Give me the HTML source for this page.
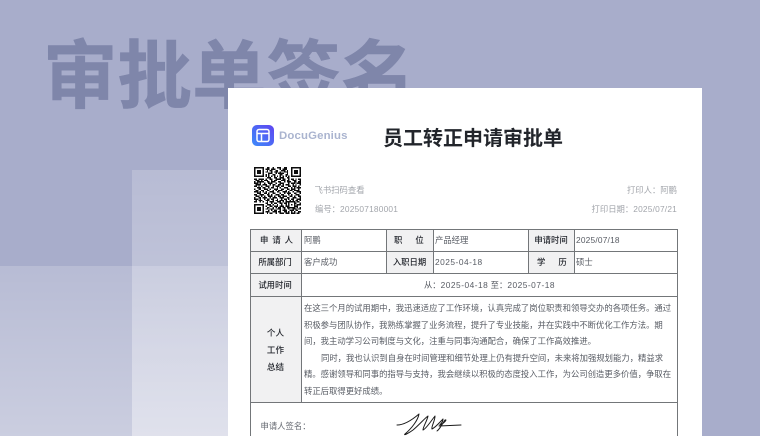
<!DOCTYPE html>
<html lang="zh-CN"><head><meta charset="utf-8"><title>审批单签名</title>
<style>
html,body{margin:0;padding:0}
body{width:760px;height:436px;overflow:hidden;position:relative;background:#a8adcb;font-family:"Liberation Sans","Noto Sans CJK SC",sans-serif}
.a{position:absolute;white-space:nowrap}
.ov1{position:absolute;left:132px;top:170px;width:100px;height:266px;background:linear-gradient(180deg,rgba(255,255,255,.18),rgba(255,255,255,.4))}
.ov2{position:absolute;left:0;top:266px;width:232px;height:170px;background:linear-gradient(180deg,rgba(255,255,255,.18),rgba(255,255,255,.4))}
h1{position:absolute;left:43px;top:21px;margin:0;font-size:74.500px;line-height:100px;font-weight:700;color:#7f86aa;-webkit-text-stroke:.6px #7f86aa;font-family:"Noto Sans CJK SC",sans-serif;white-space:nowrap}
.card{position:absolute;left:228px;top:88px;width:474px;height:348px;background:#fff;overflow:hidden}
.t{position:absolute;font-size:8.36px;line-height:12px;white-space:nowrap;color:#585c64;font-family:"Liberation Sans","Noto Sans CJK SC",sans-serif}
.b{font-weight:500;color:#23262d;text-align:center;font-family:"Noto Sans CJK SC",sans-serif}
.s{text-align:left}
.g{color:#a2a5ab}
.n{letter-spacing:.2px}
.d{letter-spacing:.5px}
.l{position:absolute;background:#737679}
.h{position:absolute;background:#f1f1f2}
</style></head><body>
<div class="ov1"></div><div class="ov2"></div>
<h1>审批单签名</h1>
<div class="card">
<svg class="a" style="left:23.500px;top:37px" width="22" height="21" viewBox="0 0 22 21"><defs><linearGradient id="lg" x1="0" y1="1" x2="1" y2="0"><stop offset="0" stop-color="#3d8bfa"/><stop offset="1" stop-color="#5f45f0"/></linearGradient></defs><rect width="22" height="21" rx="5" fill="url(#lg)"/><rect x="5" y="4.500" width="12" height="12" rx="2" fill="none" stroke="#fff" stroke-width="1.500"/><path d="M5 8.500h12M9.500 8.500v8" stroke="#fff" stroke-width="1.500" fill="none"/></svg>
<div class="a" style="left:51px;top:41px;font-size:11.4px;line-height:14px;font-weight:700;color:#aab4cf;letter-spacing:.15px">DocuGenius</div>
<div class="a" style="left:155px;top:34px;font-size:20px;line-height:30px;font-weight:700;color:#22252b;font-family:'Noto Sans CJK SC',sans-serif">员工转正申请审批单</div>

<svg class="a" style="left:26px;top:79px;opacity:.95;filter:blur(.3px)" width="47" height="47" viewBox="0 0 33 33" shape-rendering="crispEdges"><path fill="none" stroke="#000" stroke-width="1" d="M0 .5h7M9 .5h2M13 .5h1M16 .5h3M21 .5h2M26 .5h7M0 1.500h1M6 1.500h1M8 1.500h3M12 1.500h3M18 1.500h1M20 1.500h3M26 1.500h1M32 1.500h1M0 2.500h1M2 2.500h3M6 2.500h1M9 2.500h1M11 2.500h2M15 2.500h2M19 2.500h3M23 2.500h1M26 2.500h1M28 2.500h3M32 2.500h1M0 3.500h1M2 3.500h3M6 3.500h1M8 3.500h2M12 3.500h1M14 3.500h3M18 3.500h1M21 3.500h3M26 3.500h1M28 3.500h3M32 3.500h1M0 4.500h1M2 4.500h3M6 4.500h1M10 4.500h3M15 4.500h1M17 4.500h4M23 4.500h1M26 4.500h1M28 4.500h3M32 4.500h1M0 5.500h1M6 5.500h1M8 5.500h1M10 5.500h1M13 5.500h2M18 5.500h2M22 5.500h2M26 5.500h1M32 5.500h1M0 6.500h7M8 6.500h1M10 6.500h1M12 6.500h1M14 6.500h1M16 6.500h1M18 6.500h1M20 6.500h1M22 6.500h1M24 6.500h1M26 6.500h7M9 7.500h3M14 7.500h2M18 7.500h3M23 7.500h2M0 8.500h2M3 8.500h4M8 8.500h1M11 8.500h2M15 8.500h4M20 8.500h2M24 8.500h1M26 8.500h2M29 8.500h1M31 8.500h2M1 9.500h3M5 9.500h1M7 9.500h3M12 9.500h1M14 9.500h2M19 9.500h3M23 9.500h2M27 9.500h3M32 9.500h1M0 10.500h1M2 10.500h5M9 10.500h2M12 10.500h3M17 10.500h2M21 10.500h1M23 10.500h3M28 10.500h2M31 10.500h2M0 11.500h3M4 11.500h1M7 11.500h1M10 11.500h3M15 11.500h1M18 11.500h3M24 11.500h1M26 11.500h3M30 11.500h3M1 12.500h4M6 12.500h3M11 12.500h1M13 12.500h2M17 12.500h2M20 12.500h1M22 12.500h3M27 12.500h1M29 12.500h1M32 12.500h1M0 13.500h2M3 13.500h1M5 13.500h1M8 13.500h3M13 13.500h1M15 13.500h3M19 13.500h2M24 13.500h2M27 13.500h3M31 13.500h1M2 14.500h3M6 14.500h2M10 14.500h1M12 14.500h2M16 14.500h1M18 14.500h1M21 14.500h3M26 14.500h1M28 14.500h1M30 14.500h3M0 15.500h1M3 15.500h2M7 15.500h3M11 15.500h1M14 15.500h3M19 15.500h2M23 15.500h2M26 15.500h3M31 15.500h1M1 16.500h2M5 16.500h2M9 16.500h2M13 16.500h1M15 16.500h1M17 16.500h3M22 16.500h1M25 16.500h2M28 16.500h4M0 17.500h3M4 17.500h1M6 17.500h1M8 17.500h1M11 17.500h3M16 17.500h2M20 17.500h3M24 17.500h1M27 17.500h1M30 17.500h3M2 18.500h3M7 18.500h2M10 18.500h1M13 18.500h2M18 18.500h1M21 18.500h1M23 18.500h3M28 18.500h2M32 18.500h1M0 19.500h2M4 19.500h3M9 19.500h2M12 19.500h1M15 19.500h3M19 19.500h2M24 19.500h1M26 19.500h1M29 19.500h3M1 20.500h3M5 20.500h1M7 20.500h1M10 20.500h3M14 20.500h1M17 20.500h2M20 20.500h3M25 20.500h2M28 20.500h1M31 20.500h2M0 21.500h1M3 21.500h2M6 21.500h3M11 21.500h1M13 21.500h3M18 21.500h3M23 21.500h2M27 21.500h3M32 21.500h1M0 22.500h3M4 22.500h1M7 22.500h1M9 22.500h2M12 22.500h2M16 22.500h1M19 22.500h1M21 22.500h2M24 22.500h1M26 22.500h2M30 22.500h3M1 23.500h1M3 23.500h3M8 23.500h3M13 23.500h1M15 23.500h2M18 23.500h3M22 23.500h1M25 23.500h1M27 23.500h1M29 23.500h2M32 23.500h1M0 24.500h2M4 24.500h1M6 24.500h1M9 24.500h1M11 24.500h3M16 24.500h3M20 24.500h1M22 24.500h7M30 24.500h2M8 25.500h2M12 25.500h1M14 25.500h2M18 25.500h2M21 25.500h2M24 25.500h1M28 25.500h2M32 25.500h1M0 26.500h7M9 26.500h3M13 26.500h1M16 26.500h1M19 26.500h1M22 26.500h1M24 26.500h1M26 26.500h1M28 26.500h1M30 26.500h3M0 27.500h1M6 27.500h1M8 27.500h1M11 27.500h2M14 27.500h3M18 27.500h3M22 27.500h3M28 27.500h3M0 28.500h1M2 28.500h3M6 28.500h1M9 28.500h2M13 28.500h1M15 28.500h1M17 28.500h2M20 28.500h2M23 28.500h6M30 28.500h1M32 28.500h1M0 29.500h1M2 29.500h3M6 29.500h1M8 29.500h2M11 29.500h3M16 29.500h3M21 29.500h1M24 29.500h1M27 29.500h3M31 29.500h2M0 30.500h1M2 30.500h3M6 30.500h1M10 30.500h1M12 30.500h1M14 30.500h2M18 30.500h1M20 30.500h3M25 30.500h3M29 30.500h2M0 31.500h1M6 31.500h1M8 31.500h3M13 31.500h3M17 31.500h2M21 31.500h2M24 31.500h1M26 31.500h1M28 31.500h1M31 31.500h2M0 32.500h7M9 32.500h1M11 32.500h2M15 32.500h1M18 32.500h3M22 32.500h3M26 32.500h3M30 32.500h2"/></svg>

<div class="t g" style="left:86.500px;top:96px">飞书扫码查看</div>
<div class="t g" style="left:87px;top:115px">编号：<span class="n">202507180001</span></div>
<div class="t g" style="right:25px;top:96px">打印人：阿鹏</div>
<div class="t g" style="right:25px;top:115px">打印日期：<span class="n">2025/07/21</span></div>

<div class="h" style="left:22px;top:141px;width:51px;height:173px"></div>
<div class="h" style="left:158px;top:141px;width:47px;height:44px"></div>
<div class="h" style="left:300px;top:141px;width:46px;height:44px"></div>

<div class="l" style="left:22px;top:141px;width:428px;height:1px"></div>
<div class="l" style="left:22px;top:163px;width:428px;height:1px"></div>
<div class="l" style="left:22px;top:185px;width:428px;height:1px"></div>
<div class="l" style="left:22px;top:208px;width:428px;height:1px"></div>
<div class="l" style="left:22px;top:314px;width:428px;height:1px"></div>
<div class="l" style="left:22px;top:141px;width:1px;height:207px"></div>
<div class="l" style="left:449px;top:141px;width:1px;height:207px"></div>
<div class="l" style="left:73px;top:141px;width:1px;height:173px"></div>
<div class="l" style="left:158px;top:141px;width:1px;height:44px"></div>
<div class="l" style="left:205px;top:141px;width:1px;height:44px"></div>
<div class="l" style="left:300px;top:141px;width:1px;height:44px"></div>
<div class="l" style="left:346px;top:141px;width:1px;height:44px"></div>

<div class="t b s" style="left:32px;top:146px;letter-spacing:4px">申请人</div>
<div class="t b" style="left:22px;top:168px;width:50px">所属部门</div>
<div class="t b" style="left:22px;top:191px;width:50px">试用时间</div>
<div class="t b s" style="left:166px;top:146px;letter-spacing:13px">职位</div>
<div class="t b" style="left:158.500px;top:168px;width:46px">入职日期</div>
<div class="t b" style="left:300.500px;top:146px;width:45px">申请时间</div>
<div class="t b s" style="left:309px;top:168px;letter-spacing:13px">学历</div>
<div class="t b" style="left:22.500px;top:239px;width:50px;font-size:8.6px">个人</div>
<div class="t b" style="left:22.500px;top:256px;width:50px;font-size:8.6px">工作</div>
<div class="t b" style="left:22.500px;top:273px;width:50px;font-size:8.6px">总结</div>

<div class="t" style="left:76px;top:146px">阿鹏</div>
<div class="t" style="left:76px;top:168px">客户成功</div>
<div class="t" style="left:207px;top:146px">产品经理</div>
<div class="t d" style="left:207px;top:168px">2025-04-18</div>
<div class="t n" style="left:348px;top:146px">2025/07/18</div>
<div class="t" style="left:348px;top:168px">硕士</div>
<div class="t" style="left:74px;top:191px;width:375px;text-align:center">从：<span class="d">2025-04-18</span> 至：<span class="d">2025-07-18</span></div>

<div class="t" style="left:76px;top:214px">在这三个月的试用期中，我迅速适应了工作环境，认真完成了岗位职责和领导交办的各项任务。通过</div>
<div class="t" style="left:76px;top:230.600px">积极参与团队协作，我熟练掌握了业务流程，提升了专业技能，并在实践中不断优化工作方法。期</div>
<div class="t" style="left:76px;top:247.200px">间，我主动学习公司制度与文化，注重与同事沟通配合，确保了工作高效推进。</div>
<div class="t" style="left:93px;top:263.800px">同时，我也认识到自身在时间管理和细节处理上仍有提升空间，未来将加强规划能力，精益求</div>
<div class="t" style="left:76px;top:280.400px">精。感谢领导和同事的指导与支持，我会继续以积极的态度投入工作，为公司创造更多价值，争取在</div>
<div class="t" style="left:76px;top:297px">转正后取得更好成绩。</div>

<div class="t" style="left:32.500px;top:332px;color:#666a72">申请人签名：</div>
<svg class="a" style="left:165px;top:322px" width="75" height="26" viewBox="0 0 75 26" fill="none" stroke="#1b1b1b" stroke-width="1" stroke-linecap="round" stroke-linejoin="round"><path d="M4 15C11 15 19 10 26 4C25 10 19 18 12 24C10 26 16 23 20 20C26 15 32 8 35 6C34 11 30 17 30 20C33 19 38 11 42 6C42 11 38 17 39 19C43 17 47 12 50 9C50 13 46 15 47 15C50 14 55 9 52 10C49 14 47 19 44 21M46 16L68 15"/></svg>
</div>
</body></html>
